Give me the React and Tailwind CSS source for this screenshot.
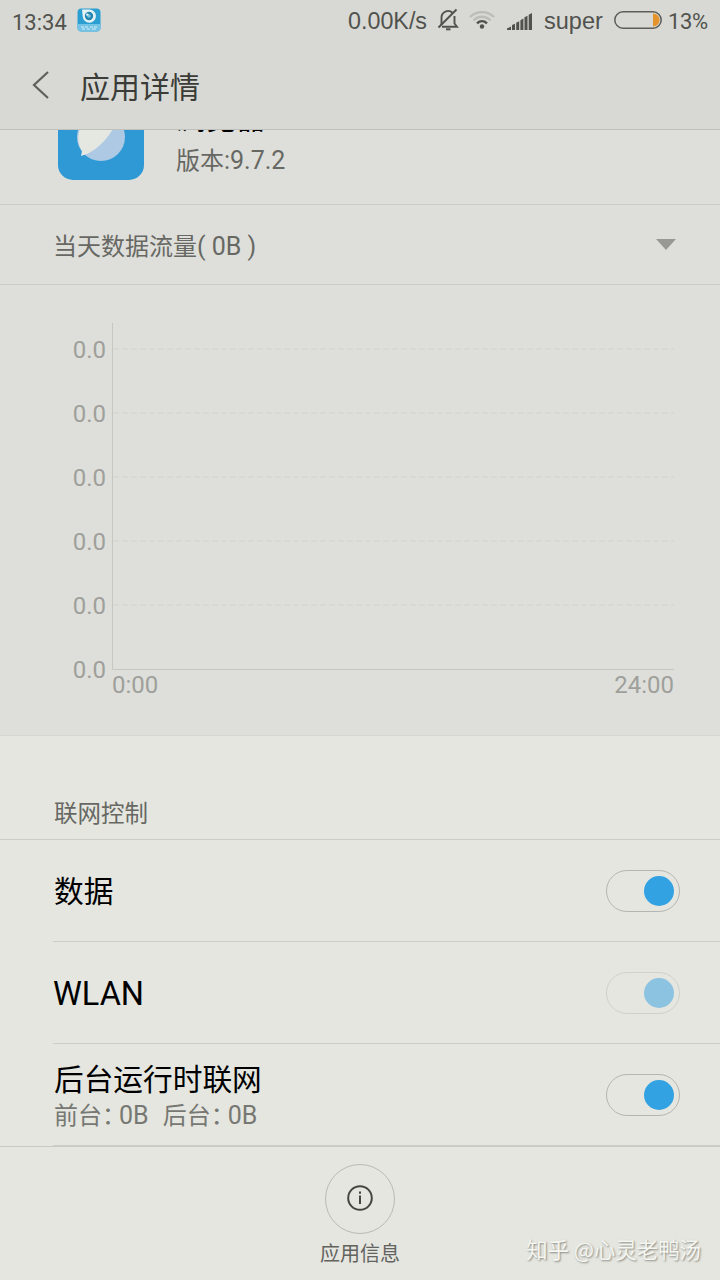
import React, { useState } from "react";
import clsx from "clsx";

const yLabels = ["0.0", "0.0", "0.0", "0.0", "0.0", "0.0"];

const networkItems = [
  { id: "data", title: "数据" },
  { id: "wlan", title: "WLAN", latin: true, disabled: true },
  {
    id: "background",
    title: "后台运行时联网",
    usage: [
      { name: "前台", value: "0B" },
      { name: "后台", value: "0B" }
    ]
  }
];

const AppBadge = () => (
  <svg width="24" height="24" viewBox="0 0 24 24" className="ml-[8px] -mt-[2px]">
    <rect x="0.5" y="0.5" width="23" height="23" rx="4" fill="#2b9fd2" />
    <path d="M0.500 16h23v3.500a4 4 0 0 1-4 4h-15a4 4 0 0 1-4-4z" fill="#72c3e6" />
    <path d="M5 1.500h7.500a6.600 6.600 0 1 1-6.800 6.800z" fill="#e6f3f5" />
    <circle cx="12" cy="8" r="4.200" fill="#2586b0" />
    <circle cx="12" cy="8" r="1.800" fill="#7cc4dd" />
    <circle cx="10.300" cy="6.600" r="1.200" fill="#e6f3f5" />
    <path d="M4 19h3m1 0h3m2 0h3m1 0h3M5 21h3m2 0h3m2 0h4" stroke="#d3edf5" strokeWidth="1" />
  </svg>
);

const BellOff = () => (
  <svg width="22" height="24" viewBox="0 0 22 24" fill="none" stroke="#51524e" strokeWidth="1.900">
    <path d="M4.500 17V9.500a6.500 6.500 0 0 1 11-4.700M17.500 8v7.500l2.500 3.300H5" />
    <path d="M19.500 1.500 1.500 19.500" />
    <path d="M9 21.300h4.500" strokeWidth="2" />
  </svg>
);

const Wifi = () => (
  <svg width="26" height="20" viewBox="0 0 26 20" fill="none" strokeWidth="2.400">
    <path d="M1 7C7.500 0.500 18.500 0.500 25 7" stroke="#bcbdb8" />
    <path d="M4.500 10.500c5-5 12-5 17 0" stroke="#bcbdb8" />
    <path d="M8 13.300c3-2.800 7-2.800 10 0" stroke="#51524e" />
    <circle cx="13" cy="16.500" r="2.200" fill="#51524e" />
  </svg>
);

const Signal = () => (
  <svg width="26" height="17" viewBox="0 0 26 17" fill="#51524e">
    <path d="M0 17v-1.500l4-2V17zM5 17v-5l3-1.200V17zM9.200 17V9.800l3-1.600V17zM13.400 17V7.200l3-1.700V17zM17.500 17V4.300l3-1.600V17zM21.700 17V1.800L25 0v17z" />
  </svg>
);

const StatusBar = () => (
  <div className="flex h-[42px] items-center whitespace-nowrap pl-3 pr-3 font-['Roboto','Noto_Sans_CJK_SC',sans-serif] text-[#51524e]">
    <span className="w-[57px] pt-[2px] text-[22px]">13:34</span>
    <AppBadge />
    <div className="ml-auto flex items-center">
      <span className="w-[79px] font-['Liberation_Sans',sans-serif] text-[23.3px]">0.00K/s</span>
      <span className="-mt-[3px] ml-[10px]"><BellOff /></span>
      <span className="-mt-[2px] ml-[10px]"><Wifi /></span>
      <span className="ml-3"><Signal /></span>
      <span className="ml-[11px] w-[60px] pt-px font-['Liberation_Sans',sans-serif] text-[23.5px]">super</span>
      <svg width="48" height="18" viewBox="0 0 48 18" className="-mt-[2px] ml-[10px]">
        <rect x="0.800" y="0.800" width="46.400" height="16.400" rx="8.200" fill="none" stroke="#5d5e59" strokeWidth="1.500" />
        <path d="M39 2.500c4 0 6.500 3 6.500 6.500s-2.500 6.500-6.500 6.500z" fill="#e5932b" />
      </svg>
      <span className="ml-[6px] w-10 text-[22px] tracking-[-0.4px]">13%</span>
    </div>
  </div>
);

const Header = () => (
  <header className="h-[130px] shrink-0 border-b border-[#bfc0bb] bg-[#d8d9d4]">
    <StatusBar />
    <div className="flex h-[85px] items-center pl-8">
      <button aria-label="返回">
        <svg width="18" height="28" viewBox="0 0 18 28" fill="none" stroke="#5f605b" strokeWidth="2.200">
          <path d="M16 1 2 14l14 13" />
        </svg>
      </button>
      <h1 className="ml-[30px] pt-px text-[30px] text-[#3b3c38]">应用详情</h1>
    </div>
  </header>
);

const AppInfo = () => (
  <div className="flex h-[75px] shrink-0 items-end overflow-hidden border-b border-[#cccdc8] pb-6 pl-[58px]">
    <svg width="86" height="86" viewBox="0 0 86 86" className="shrink-0">
      <rect width="86" height="86" rx="15" fill="#2e99d4" />
      <circle cx="43" cy="43" r="24" fill="#adc9e4" />
      <path d="M23 62 24 57A24 24 0 0 1 60 26C52 42 42 54 29 60z" fill="#e5e7e1" />
    </svg>
    <div className="ml-8">
      <div className="mb-[3px] text-[30px] leading-[38px] text-black">浏览器</div>
      <div className="text-[24px] leading-[42px] text-[#676863]">
        版本<span className="font-['Roboto',sans-serif] text-[25px] leading-none">:9.7.2</span>
      </div>
    </div>
  </div>
);

const TrafficChart = () => (
  <div className="flex h-[451px] shrink-0 border-b border-[#d6d7d2] pl-[55px] pr-[46px] pt-8 font-['Roboto',sans-serif] text-[24px] text-[#9fa09b]">
    <div className="w-[57px] pr-[6px] text-right">
      {yLabels.map((label, i) => (
        <div key={i} className="h-16 leading-[66px]">{label}</div>
      ))}
    </div>
    <div className="flex-1 pt-[6px]">
      <svg width="562" height="348" viewBox="0 0 562 348" fill="none">
        {yLabels.slice(1).map((_, i) => (
          <path key={i} d={`M1 ${26 + i * 64}H562`} stroke="#d6d7d2" strokeWidth="1.500" strokeDasharray="6 3" />
        ))}
        <path d="M0.500 0V346.500H562" stroke="#c6c7c2" />
      </svg>
      <div className="flex justify-between leading-[28px]">
        <span>0:00</span>
        <span>24:00</span>
      </div>
    </div>
  </div>
);

const Toggle = ({ checked, disabled, onClick }) => (
  <button
    role="switch"
    aria-checked={checked}
    disabled={disabled}
    onClick={onClick}
    className={clsx(
      "flex h-[42px] w-[74px] items-center rounded-full border px-[5px]",
      checked ? "justify-end" : "justify-start",
      disabled ? "border-[#d0d1cc]" : "border-[#b5b6b1]"
    )}
  >
    <span className={clsx("h-[30px] w-[30px] rounded-full", disabled ? "bg-[#8bc3e0]" : "bg-[#32a2e3]")} />
  </button>
);

const NetworkRow = ({ item, checked, onToggle }) => (
  <div className="ml-[53px] flex h-[102px] shrink-0 items-center justify-between border-b border-[#cccdc8] pr-10">
    <div className={item.usage ? "" : "pb-[2px]"}>
      <div
        className={clsx(
          "text-black",
          item.latin ? "pt-1 font-['Roboto',sans-serif] text-[32.5px]" : "pl-px text-[29.7px]",
          item.usage ? "leading-[38px]" : "leading-[44px]"
        )}
      >
        {item.title}
      </div>
      {item.usage && (
        <div className="flex gap-[14px] pl-px text-[24px] leading-[34px] text-[#777873]">
          {item.usage.map(({ name, value }) => (
            <span key={name}>
              {name}<span className="tracking-[-7px]">：</span>
              <span className="font-['Roboto',sans-serif] text-[25px] leading-none">{value}</span>
            </span>
          ))}
        </div>
      )}
    </div>
    <Toggle checked={checked} disabled={item.disabled} onClick={onToggle} />
  </div>
);

const Footer = () => (
  <footer className="relative flex flex-1 flex-col items-center border-t border-[#c8c9c4] pt-[17px]">
    <button className="flex h-[70px] w-[70px] items-center justify-center rounded-full border border-[#b9bab5]">
      <svg width="26" height="26" viewBox="0 0 26 26" fill="none" stroke="#454642" className="-mt-[2px]">
        <circle cx="13" cy="13" r="11.800" strokeWidth="2" />
        <path d="M13 10.500V19M13 6.500v2.300" strokeWidth="2" />
      </svg>
    </button>
    <span className="mt-1 text-[20px] leading-[30px] text-[#62635e]">应用信息</span>
    <span className="absolute bottom-[16px] right-[19px] text-[21.4px] leading-[30px] text-[#f5f6f1] [text-shadow:1px_1px_2px_#85867f]">
      知乎 @心灵老鸭汤
    </span>
  </footer>
);

const App = () => {
  const [enabled, setEnabled] = useState({ data: true, wlan: true, background: true });

  const toggle = (id) => setEnabled((prev) => ({ ...prev, [id]: !prev[id] }));

  return (
    <div className="flex h-[1280px] w-[720px] flex-col overflow-hidden bg-[#e5e6e0] font-['Noto_Sans_CJK_SC',sans-serif]">
      <Header />
      <section className="shrink-0 bg-[#dedfda]">
        <AppInfo />
        <div className="flex h-20 items-center justify-between border-b border-[#cccdc8] pl-[53px] pr-[44px]">
          <span className="whitespace-pre text-[24px] text-[#676863]">
            当天数据流量<span className="font-['Roboto',sans-serif] text-[25px] leading-none">( 0B )</span>
          </span>
          <svg width="20" height="12" viewBox="0 0 20 12" fill="#989994">
            <path d="M0 0h20L10 11z" />
          </svg>
        </div>
        <TrafficChart />
      </section>
      <div className="flex h-[104px] shrink-0 items-end border-b border-[#cccdc8] pb-[9px] pl-[54px] text-[23.5px] text-[#676863]">
        联网控制
      </div>
      {networkItems.map((item) => (
        <NetworkRow
          key={item.id}
          item={item}
          checked={enabled[item.id]}
          onToggle={() => toggle(item.id)}
        />
      ))}
      <Footer />
    </div>
  );
};

export default App;
